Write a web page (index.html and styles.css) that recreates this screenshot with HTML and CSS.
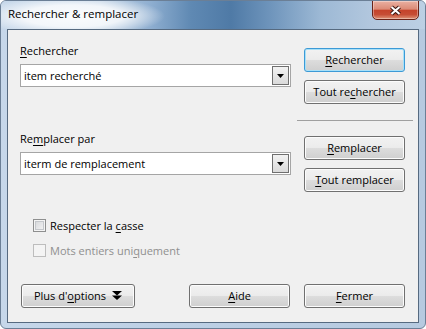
FILE: index.html
```html
<!DOCTYPE html>
<html>
<head>
  <title>Rechercher &amp; remplacer</title>
  <link rel="stylesheet" href="styles.css">
</head>
<body>
  <div class="window">
    <div class="titlebar">
      <span class="title">Rechercher &amp; remplacer</span>
      <button class="close-btn" title="Fermer">
        <svg width="13" height="11" viewBox="0 0 13 11">
          <path d="M2.5 2 L10.5 9 M10.5 2 L2.5 9" stroke="#3e1b15" stroke-width="4.2" fill="none"/>
          <path d="M2.5 2 L10.5 9 M10.5 2 L2.5 9" stroke="#fff" stroke-width="2" fill="none"/>
        </svg>
      </button>
    </div>

    <div class="client">
      <div class="main">
        <div class="fields">
          <label class="field-label"><u>R</u>echercher</label>
          <div class="combo">
            <span class="combo-text">item recherché</span>
            <span class="combo-drop">
              <svg width="7" height="4" viewBox="0 0 7 4"><polygon points="0,0 7,0 3.5,4" fill="#000"/></svg>
            </span>
          </div>

          <label class="field-label second">Re<u>m</u>placer par</label>
          <div class="combo">
            <span class="combo-text">iterm de remplacement</span>
            <span class="combo-drop">
              <svg width="7" height="4" viewBox="0 0 7 4"><polygon points="0,0 7,0 3.5,4" fill="#000"/></svg>
            </span>
          </div>

          <div class="checks">
            <label class="check"><span class="box"></span><span>Respecter la <u>c</u>asse</span></label>
            <label class="check disabled"><span class="box"></span><span>Mots entiers uni<u>q</u>uement</span></label>
          </div>
        </div>

        <div class="actions">
          <button class="btn default"><u>R</u>echercher</button>
          <button class="btn">Tout re<u>c</u>hercher</button>
          <hr class="sep">
          <button class="btn"><u>R</u>emplacer</button>
          <button class="btn"><u>T</u>out remplacer</button>
        </div>
      </div>

      <div class="footer">
        <button class="btn more"><span>Plus d'<u>o</u>ptions</span>
          <svg width="10" height="9" viewBox="0 0 10 9">
            <polygon points="0,0 10,0 5,4.5" fill="#000"/>
            <polygon points="0,4.5 10,4.5 5,9" fill="#000"/>
          </svg>
        </button>
        <span class="spacer"></span>
        <button class="btn"><u>A</u>ide</button>
        <button class="btn"><u>F</u>ermer</button>
      </div>
    </div>
  </div>
</body>
</html>
```

FILE: styles.css
```css
* {
  box-sizing: border-box;
}

body {
  margin: 0;
  background: #fff;
  font-family: "Open Sans", "Noto Sans", sans-serif;
  font-size: 11px;
  color: #000;
}

u {
  text-underline-offset: 2px;
}

.window {
  width: 426px;
  height: 329px;
  border: 1px solid #6b7f96;
  border-radius: 6px;
  overflow: hidden;
  display: flex;
  flex-direction: column;
  background: linear-gradient(to right, #c6d7ea, #bdd0e5 40%, #b6cae0);
}

.titlebar {
  height: 28px;
  flex-shrink: 0;
  display: flex;
  justify-content: space-between;
  align-items: flex-start;
  padding-left: 7px;
  background:
    radial-gradient(ellipse 92px 20px at 72px 15px, rgba(255,255,255,0.92) 0%, rgba(255,255,255,0.8) 55%, rgba(255,255,255,0) 100%),
    linear-gradient(to right, #c7d8ea 0px, #bfd2e6 100px, #8eaed0 150px, #5f89b3 190px, #4f7aa6 230px, #6f95bc 270px, #9db9d5 320px, #b2c7de 370px, #bcd0e4 424px);
}

.title {
  padding-top: 5px;
  font-size: 11.5px;
  line-height: 15px;
}

.close-btn {
  width: 47px;
  height: 20px;
  margin-top: -1px;
  margin-right: 6px;
  padding: 0;
  border: 1px solid #6a2318;
  border-radius: 0 0 5px 5px;
  background: linear-gradient(#eab0a2 0%, #dc8b76 45%, #c5432b 52%, #c64d35 75%, #de9478 100%);
  box-shadow: inset 0 0 0 1px rgba(255,255,255,0.35);
  display: flex;
  align-items: center;
  justify-content: center;
}

.client {
  flex: 1;
  margin: 0 6px 5px 6px;
  border: 1px solid #566a80;
  background: #f0f0f0;
  display: flex;
  flex-direction: column;
}

.main {
  display: grid;
  grid-template-columns: 271px 101px;
  column-gap: 13px;
  padding: 13px 13px 0 12px;
}

.field-label {
  display: block;
  line-height: 15px;
}

.field-label.second {
  margin-top: 44px;
}

.combo {
  margin-top: 6px;
  height: 23px;
  border: 1px solid #a5a5a5;
  background: #fff;
  display: flex;
  align-items: center;
  padding: 1px 1px 1px 3px;
}

.combo-text {
  flex: 1;
  line-height: 15px;
}

.combo-drop {
  width: 17px;
  height: 19px;
  border: 1px solid #6f6f6f;
  background: linear-gradient(#f2f2f2, #dadada);
  display: flex;
  align-items: center;
  justify-content: center;
}

.checks {
  margin-top: 43px;
  display: flex;
  flex-direction: column;
  gap: 10px;
}

.check {
  display: flex;
  align-items: center;
  line-height: 15px;
  margin-left: 13px;
}

.box {
  width: 13px;
  height: 13px;
  margin-right: 4px;
  border: 1px solid #8e8f8f;
  background: linear-gradient(135deg, #d2d4d7, #f7f7f7);
  box-shadow: inset 0 0 0 1px #f4f4f4, inset 0 0 0 2px #c4c7cb;
}

.check.disabled {
  color: #8f8f8f;
}

.check.disabled .box {
  border-color: #bdbdbd;
  background: #f4f4f4;
  box-shadow: none;
}

.actions {
  padding-top: 5px;
  display: flex;
  flex-direction: column;
}

.btn {
  width: 101px;
  height: 24px;
  margin: 0 0 8px 0;
  padding: 0 0 1px 0;
  font-family: inherit;
  font-size: 11px;
  line-height: 15px;
  color: #000;
  border: 1px solid #707070;
  border-radius: 3px;
  background: linear-gradient(#f2f2f2 0%, #ebebeb 50%, #dddddd 50%, #cfcfcf 100%);
  box-shadow: inset 0 0 0 1px #fcfcfc;
  display: flex;
  align-items: center;
  justify-content: center;
}

.btn.default {
  border-color: #3c9ad6;
  box-shadow: inset 0 0 0 1px #a8e0f8;
}

.sep {
  margin: 8px -8px 15px -7px;
  border: none;
  border-top: 1px solid #a0a0a0;
  height: 0;
}

.footer {
  margin-top: auto;
  display: flex;
  gap: 14px;
  padding: 0 13px 14px 13px;
}

.footer .btn {
  margin: 0;
}

.btn.more {
  width: 114px;
  gap: 6px;
}

.spacer {
  flex: 1;
}
```
